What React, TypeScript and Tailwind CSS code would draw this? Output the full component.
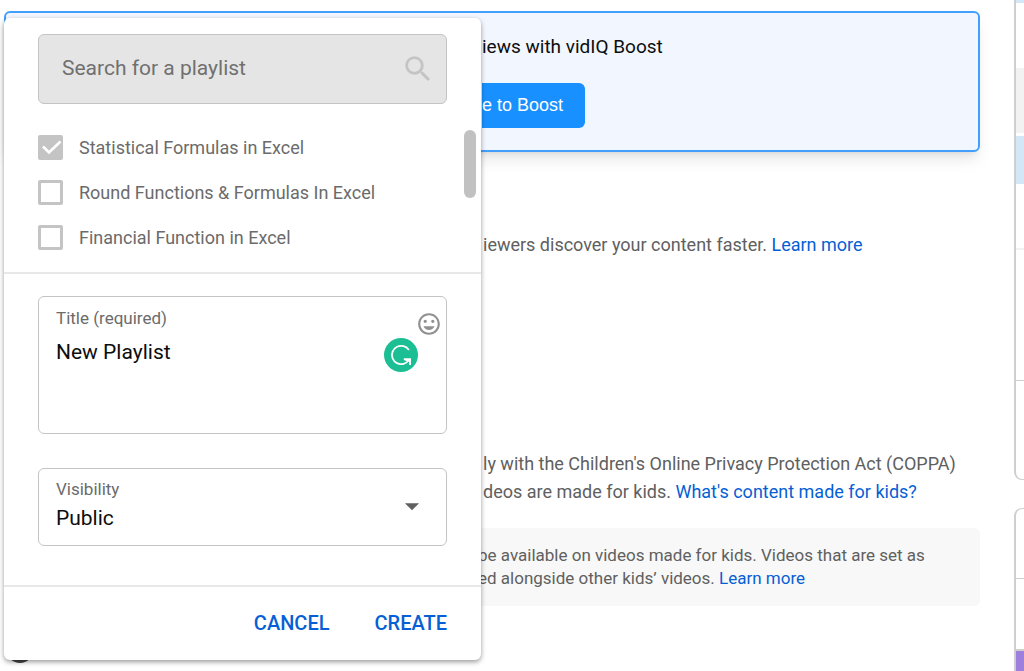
import React, {useState} from "react";

interface PlaylistItem {
    name: string
    checked: boolean
}

const initialPlaylists: PlaylistItem[] = [
    {name: "Statistical Formulas in Excel", checked: true},
    {name: "Round Functions & Formulas In Excel", checked: false},
    {name: "Financial Function in Excel", checked: false},
]

const SearchIcon = () => (
    <svg viewBox="0 0 24 24" className="size-[34px] shrink-0 fill-[#c4c4c4]" aria-hidden="true">
        <path d="M15.5 14h-.79l-.28-.27A6.471 6.471 0 0 0 16 9.5 6.5 6.5 0 1 0 9.5 16c1.61 0 3.09-.59 4.23-1.57l.27.28v.79l5 4.99L20.49 19l-4.99-5zm-6 0C7.01 14 5 11.99 5 9.5S7.01 5 9.5 5 14 7.01 14 9.5 11.99 14 9.5 14z"/>
    </svg>
)

const MoodIcon = () => (
    <svg viewBox="0 0 24 24" className="size-[26px] fill-[#909090]" aria-hidden="true">
        <path d="M11.99 2C6.47 2 2 6.48 2 12s4.47 10 9.99 10C17.52 22 22 17.52 22 12S17.52 2 11.99 2zM12 20c-4.42 0-8-3.58-8-8s3.58-8 8-8 8 3.58 8 8-3.58 8-8 8zm3.5-9c.83 0 1.5-.67 1.5-1.5S16.33 8 15.5 8 14 8.67 14 9.5s.67 1.5 1.5 1.5zm-7 0c.83 0 1.5-.67 1.5-1.5S9.33 8 8.5 8 7 8.67 7 9.5 7.67 11 8.5 11zm3.5 6.5c2.33 0 4.31-1.46 5.11-3.5H6.89c.8 2.04 2.78 3.5 5.11 3.5z"/>
    </svg>
)

const GrammarlyIcon = () => (
    <svg viewBox="0 0 34 34" className="size-[34px]" aria-hidden="true">
        <circle cx="17" cy="17" r="17" fill="#1cbf93"/>
        <path d="M24.9 12A9.2 9.2 0 1 0 19.5 25.9C22 25.2 23.8 23.8 25.2 21.4" fill="none" stroke="#fff" strokeWidth="1.8"/>
        <path d="M19.8 20.2h7.2v6.9h-1.8l-.2-3.4-2.4-.6-2.8-1.2z" fill="#fff"/>
    </svg>
)

const BoostPanel = () => (
    <section className="rounded-md border-2 border-[#429ffb] bg-[#f2f7ff] pt-[20px] pb-[22px] pl-[476px] shadow-lg">
        <h2 className="text-[19px] leading-7 text-[#0d0d0d]">iews with vidIQ Boost</h2>
        <button type="button" className="mt-[22px] h-[45px] rounded-r-md bg-[#1890ff] pr-[22px] pb-[2px] font-['Liberation_Sans',sans-serif] text-lg text-white">
            e to Boost
        </button>
    </section>
)

const SideRail = () => (
    <aside className="flex w-[10px] shrink-0 flex-col overflow-hidden">
        <div className="h-[480px] shrink-0 overflow-hidden rounded-bl-lg border-b border-l-2 border-[#cfcfcf]">
            <div className="h-[3px] bg-[#d3e7f6]"/>
            <div className="mt-[65px] h-[65px] bg-[#f2f2f2]"/>
            <div className="mt-[3px] h-12 bg-[#d3e7f6]"/>
            <div className="mt-16 h-[2px] bg-[#f2f2f2]"/>
            <div className="mt-[130px] h-px bg-[#cfcfcf]"/>
        </div>
        <div className="mt-7 flex flex-1 flex-col rounded-tl-lg border-t border-l-2 border-[#cfcfcf]">
            <div className="mt-[69px] h-px bg-[#cfcfcf]"/>
            <div className="mt-[70px] h-[2px] bg-[#cfcfcf]"/>
            <div className="flex-1 bg-[#9d7fdd]"/>
        </div>
    </aside>
)

const PlaylistDialog = () => {
    const [playlists, setPlaylists] = useState(initialPlaylists)
    const [title, setTitle] = useState("New Playlist")

    const toggle = (index: number) => {
        setPlaylists(playlists.map((item, i) => i === index ? {...item, checked: !item.checked} : item))
    }

    return (
        <div
            role="dialog"
            aria-label="Playlists"
            className="absolute top-[18px] left-1 w-[477px] rounded-md bg-white shadow-[0_2px_5px_rgba(0,0,0,0.4)]"
        >
            <div className="px-[34px] pt-4">
                <div className="flex h-[70px] items-center rounded-md border border-[#c4c4c4] bg-[#e5e5e5] pr-[11px] pl-[23px]">
                    <input
                        type="search"
                        aria-label="Search for a playlist"
                        placeholder="Search for a playlist"
                        className="min-w-0 flex-1 bg-transparent text-[21px] text-[#707070] outline-none placeholder:text-[#707070]"
                    />
                    <SearchIcon/>
                </div>
            </div>

            <div className="mt-[21px] flex border-b-2 border-[#e8e8e8] pr-[5px] pb-[12px] pl-[34px]">
                <ul className="flex-1">
                    {playlists.map((item, index) => (
                        <li key={item.name}>
                            <label className="flex h-[45px] items-center gap-4 text-lg text-[#6b6b6b]">
                                <span className="grid size-[25px] place-items-center">
                                    <input
                                        type="checkbox"
                                        checked={item.checked}
                                        onChange={() => toggle(index)}
                                        className="col-start-1 row-start-1 size-[25px] appearance-none rounded-xs border-3 border-[#c4c4c4] checked:bg-[#c4c4c4]"
                                    />
                                    {item.checked && (
                                        <svg viewBox="0 0 25 25" className="pointer-events-none col-start-1 row-start-1 size-[25px]" aria-hidden="true">
                                            <path d="M5 11.5l6 6L22.5 6.5" fill="none" stroke="#fff" strokeWidth="2.6"/>
                                        </svg>
                                    )}
                                </span>
                                {item.name}
                            </label>
                        </li>
                    ))}
                </ul>
                <div className="mt-[5px] h-[68px] w-3 rounded-full bg-[#c1c1c1]"/>
            </div>

            <div className="flex flex-col gap-[34px] px-[34px] pt-[22px] pb-[39px]">
                <div className="relative flex h-[138px] flex-col rounded-md border border-[#c4c4c4] pt-[9px] pl-[17px]">
                    <label htmlFor="title" className="text-[17px] leading-6 text-[#6b6b6b]">Title (required)</label>
                    <textarea
                        id="title"
                        value={title}
                        onChange={(e) => setTitle(e.target.value)}
                        className="mt-2 flex-1 resize-none bg-transparent text-[21px] leading-7 text-[#0d0d0d] outline-none"
                    />
                    <button type="button" aria-label="Insert emoji" className="absolute top-[14px] right-1">
                        <MoodIcon/>
                    </button>
                    <span className="absolute top-[41px] right-7">
                        <GrammarlyIcon/>
                    </span>
                </div>

                <div className="relative flex h-[78px] flex-col rounded-md border border-[#c4c4c4] pt-2 pl-[17px]">
                    <label htmlFor="visibility" className="text-[17px] leading-6 text-[#6b6b6b]">Visibility</label>
                    <select id="visibility" className="h-9 appearance-none bg-transparent text-[21px] text-[#0d0d0d] outline-none">
                        <option>Public</option>
                    </select>
                    <svg viewBox="0 0 24 24" className="pointer-events-none absolute top-5 right-[17px] size-[34px] fill-[#606060]" aria-hidden="true">
                        <path d="M7 10l5 5 5-5z"/>
                    </svg>
                </div>
            </div>

            <div className="flex h-[75px] items-center justify-end gap-[45px] border-t-2 border-[#e8e8e8] pr-[34px] pb-[2px] text-xl font-medium text-[#065fd4]">
                <button type="button">CANCEL</button>
                <button type="button">CREATE</button>
            </div>
        </div>
    )
}

const App: React.FC = () => {
    return (
        <div className="relative flex min-h-screen bg-white font-['Roboto','Liberation_Sans',sans-serif]">
            <main className="min-w-0 flex-1 pt-[11px] pr-[34px] pl-1">
                <BoostPanel/>
                <p className="mt-[79px] pl-[479px] text-lg leading-7 text-[#606060]">
                    iewers discover your content faster.{" "}
                    <a href="#" className="text-[#065fd4]">Learn more</a>
                </p>
                <p className="mt-[191px] pl-[479px] text-lg leading-7 text-[#606060]">
                    ly with the Children's Online Privacy Protection Act (COPPA)
                    <br/>
                    deos are made for kids.{" "}
                    <a href="#" className="text-[#065fd4]">What's content made for kids?</a>
                </p>
                <p className="mt-[22px] rounded-md bg-[#f8f8f8] py-4 pl-[474px] text-[17px] leading-[23px] text-[#606060]">
                    be available on videos made for kids. Videos that are set as
                    <br/>
                    ed alongside other kids’ videos.{" "}
                    <a href="#" className="text-[#065fd4]">Learn more</a>
                </p>
                <input
                    type="radio"
                    aria-label="Made for kids"
                    className="mt-[31px] ml-[3px] block size-[26px] appearance-none rounded-full border-3 border-[#444]"
                />
            </main>
            <SideRail/>
            <PlaylistDialog/>
        </div>
    )
}

export default App
